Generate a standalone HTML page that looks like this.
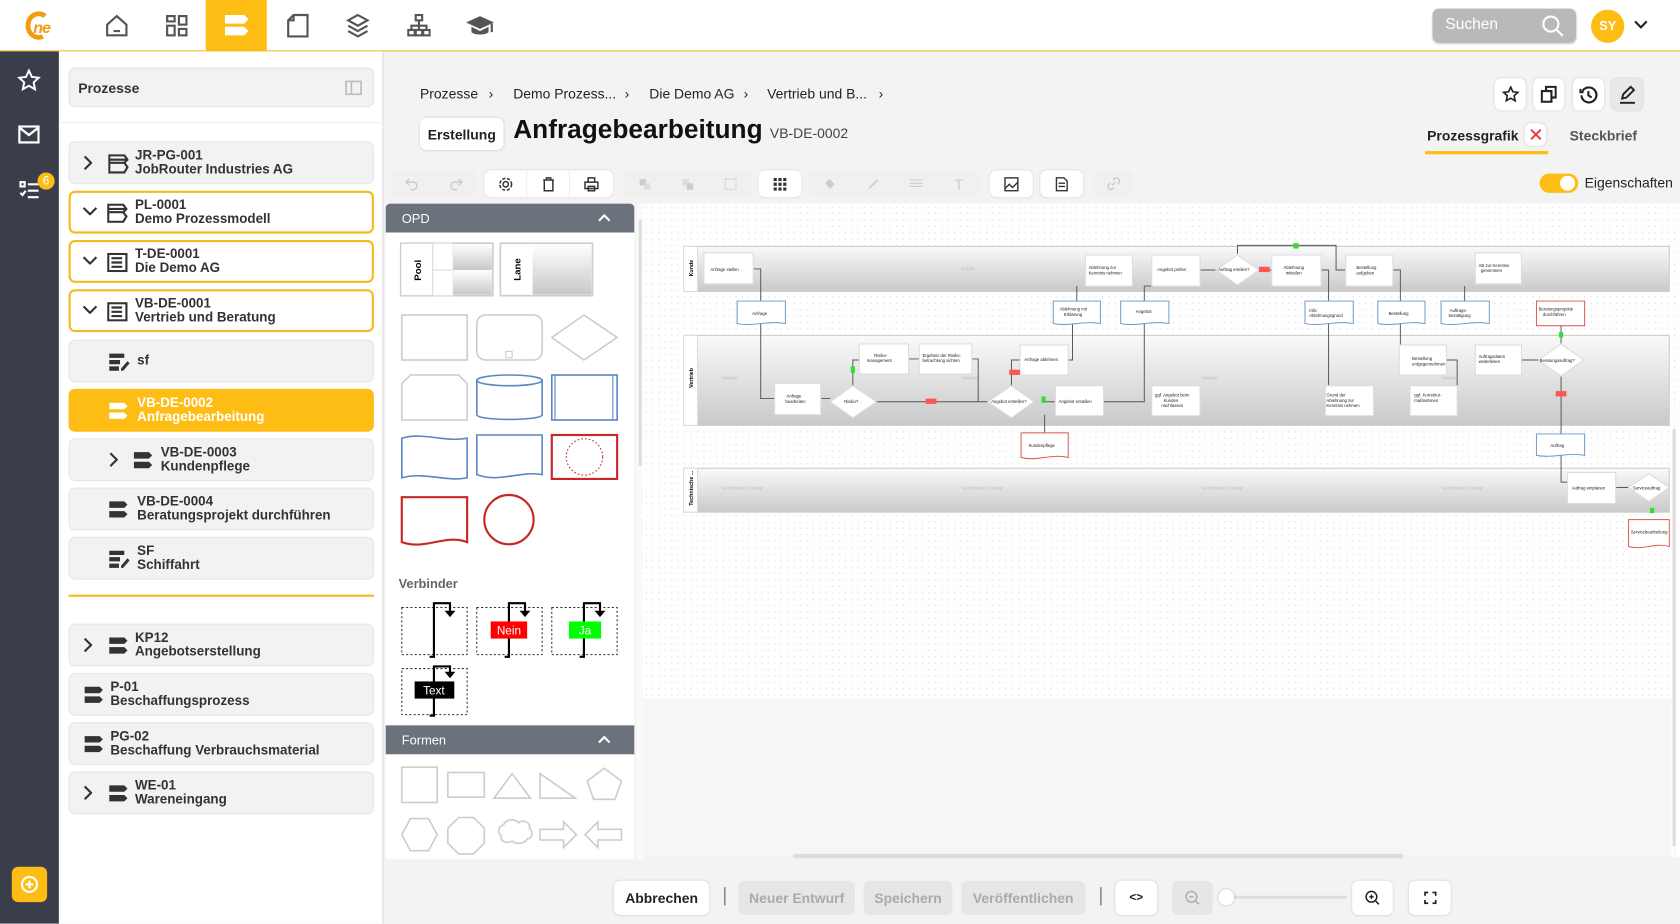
<!DOCTYPE html>
<html><head><meta charset="utf-8">
<style>
*{box-sizing:border-box;margin:0;padding:0}
html,body{width:1680px;height:923px;overflow:hidden;background:#f3f3f3}
body{font-family:"Liberation Sans",sans-serif;color:#222}
#w{position:absolute;left:0;top:0;width:1568px;height:862px;transform:scale(1.07143);transform-origin:0 0;background:#f3f3f3}
.a{position:absolute}
.top{left:0;top:0;width:1568px;height:48px;background:#fff;border-bottom:1px solid #f3b71f}
.nav{top:0;width:57px;height:48px;display:flex;align-items:center;justify-content:center}
.side{left:0;top:48px;width:55px;height:814px;background:#3a3e4a}
.tree{left:55px;top:48px;width:303px;height:814px;background:#fff;border-right:1px solid #ddd}
.it{position:absolute;left:64px;width:285px;height:40px;border-radius:6px;background:#f2f2f2;border:1px solid #e6e6e6;font-size:12.5px;font-weight:bold;color:#333;line-height:13px}
.it.o{background:#fff;border:2px solid #f5bb1c}
.it.y{background:#fdbd14;border:1px solid #fdbd14;color:#fff}
.it .t{position:absolute;top:6px}
.it .c{position:absolute;top:12px}
.it .i{position:absolute;top:11px}
.btn{position:absolute;background:#fff;border-radius:6px;box-shadow:0 0 2px rgba(0,0,0,.15);display:flex;align-items:center;justify-content:center}
.tb{position:absolute;top:159px;height:25px;border-radius:6px;display:flex}
.tb.w{background:#fff;box-shadow:0 0 2px rgba(0,0,0,.12)}
.tb.d{background:#f0f0f0}
.tb div{width:40px;height:25px;display:flex;align-items:center;justify-content:center;border-right:1px solid #eee}
.tb div:last-child{border-right:none}
.bb{position:absolute;top:822px;height:32px;border-radius:6px;font-size:13px;display:flex;align-items:center;justify-content:center}
.bc{position:absolute;top:80px;font-size:13px;color:#222;white-space:nowrap}
</style></head><body><div id="w">

<!-- top bar -->
<div class="a top"></div>
<svg class="a" style="left:22px;top:9px" width="36" height="30" viewBox="0 0 36 30"><path d="M20 6A10 11 0 1 0 18 25" fill="none" stroke="#f39c12" stroke-width="4.5"/><text x="9" y="22" font-size="15" font-weight="bold" font-style="italic" fill="#f39c12" font-family="Liberation Sans" letter-spacing="-1">ne</text></svg>
<div class="a nav" style="left:80px"><svg width="24" height="24" viewBox="0 0 24 24" fill="none" stroke="#555" stroke-width="2"><path d="M3 11L12 3l9 8v10H3z"/><path d="M9 17h6"/></svg></div>
<div class="a nav" style="left:136px"><svg width="22" height="22" viewBox="0 0 22 22" fill="none" stroke="#555" stroke-width="2"><rect x="2" y="2" width="7" height="5"/><rect x="13" y="2" width="7" height="8"/><rect x="2" y="11" width="7" height="9"/><rect x="13" y="14" width="7" height="6"/></svg></div>
<div class="a nav" style="left:192px;background:#fdbd14"><svg width="26" height="24" viewBox="0 0 26 24" fill="#fff"><path d="M2 2h18l4 4-4 4H2z"/><path d="M2 13h18l4 4-4 4H2z"/></svg></div>
<div class="a nav" style="left:249px"><svg width="22" height="24" viewBox="0 0 22 24" fill="none" stroke="#555" stroke-width="2"><path d="M7 2h13v20H2V7z M7 2v5H2"/></svg></div>
<div class="a nav" style="left:305px"><svg width="24" height="24" viewBox="0 0 24 24" fill="none" stroke="#555" stroke-width="2"><path d="M12 2l9 5-9 5-9-5z M3 12l9 5 9-5 M3 17l9 5 9-5"/></svg></div>
<div class="a nav" style="left:362px"><svg width="22" height="22" viewBox="0 0 22 22" fill="none" stroke="#555" stroke-width="2"><rect x="8" y="1" width="6" height="5"/><rect x="1" y="15" width="6" height="5"/><rect x="15" y="15" width="6" height="5"/><rect x="8" y="15" width="6" height="5"/><path d="M11 6v9 M4 15v-4h14v4"/></svg></div>
<div class="a nav" style="left:419px"><svg width="28" height="22" viewBox="0 0 28 22" fill="#555"><path d="M14 2L1 8l13 6 13-6z"/><path d="M6 12v5c3 3 13 3 16 0v-5l-8 4z"/><path d="M25 9v8" stroke="#555" stroke-width="2"/></svg></div>
<div class="a" style="left:1337px;top:8px;width:134px;height:32px;background:#b9b9b9;border-radius:6px;box-shadow:0 1px 2px rgba(0,0,0,.2)"><span class="a" style="left:12px;top:7px;color:#fff;font-size:14.5px">Suchen</span><svg class="a" style="left:101px;top:5px" width="22" height="22" viewBox="0 0 22 22" fill="none" stroke="#fff" stroke-width="2"><circle cx="9.5" cy="9.5" r="7"/><path d="M14.5 14.5l6 6"/></svg></div>
<div class="a" style="left:1485px;top:9px;width:31px;height:31px;border-radius:50%;background:#fdbd14;color:#fff;font-size:12px;font-weight:bold;text-align:center;line-height:31px">SY</div>
<svg class="a" style="left:1525px;top:19px" width="13" height="9" viewBox="0 0 13 9" fill="none" stroke="#222" stroke-width="2"><path d="M1 1l5.5 5.5L12 1"/></svg>

<!-- side -->
<div class="a side"></div>
<svg class="a" style="left:16px;top:64px" width="22" height="22" viewBox="0 0 24 24" fill="none" stroke="#fff" stroke-width="2"><path d="M12 2l3 6.5 7 .8-5.2 4.8 1.4 7L12 17.5 5.8 21l1.4-7L2 9.3l7-.8z"/></svg>
<svg class="a" style="left:17px;top:117px" width="20" height="17" viewBox="0 0 20 17" fill="none" stroke="#fff" stroke-width="2.2"><rect x="1" y="1" width="18" height="15"/><path d="M1 2l9 7 9-7"/></svg>
<svg class="a" style="left:18px;top:168px" width="20" height="18" viewBox="0 0 20 18" fill="none" stroke="#fff" stroke-width="2"><rect x="1" y="2" width="4" height="4"/><path d="M8 4h10 M8 10h10 M8 16h10 M1 12l2 2 3-4"/></svg>
<div class="a" style="left:35px;top:161px;width:16px;height:16px;border-radius:50%;background:#fdbd14;color:#fff;font-size:11px;text-align:center;line-height:16px">6</div>
<div class="a" style="left:11px;top:809px;width:33px;height:33px;border-radius:6px;background:#fdbd14"><svg class="a" style="left:8px;top:8px" width="17" height="17" viewBox="0 0 17 17" fill="none" stroke="#fff" stroke-width="2"><circle cx="8.5" cy="8.5" r="7"/><path d="M8.5 5v7M5 8.5h7"/></svg></div>

<!-- tree -->
<div class="a tree"></div>
<div class="a" style="left:64px;top:63px;width:285px;height:37px;background:#f2f2f2;border:1px solid #e4e4e4;border-radius:6px;font-size:13px;font-weight:bold;color:#333;padding:11px 8px">Prozesse<svg class="a" style="left:257px;top:11px" width="16" height="14" viewBox="0 0 16 14" fill="none" stroke="#bbb" stroke-width="1.5"><rect x="1" y="1" width="14" height="12"/><path d="M6 1v12"/></svg></div>
<div class="a" style="left:55px;top:114px;width:303px;height:1px;background:#eee"></div>

<div class="it" style="top:132px"><svg class="c" style="left:13px" width="8" height="14" viewBox="0 0 8 14" fill="none" stroke="#333" stroke-width="2"><path d="M1 1l6 6-6 6"/></svg><svg class="i" style="left:36px" width="19" height="18" viewBox="0 0 19 18" fill="none" stroke="#333" stroke-width="2"><path d="M1 1h14l3 4-3 3H1z M1 8h14l3 4-3 5H1z M1 5h16"/></svg><div class="t" style="left:61px">JR-PG-001<br>JobRouter Industries AG</div></div>
<div class="it o" style="top:178px"><svg class="c" style="left:11px;top:13px" width="14" height="8" viewBox="0 0 14 8" fill="none" stroke="#333" stroke-width="2"><path d="M1 1l6 6 6-6"/></svg><svg class="i" style="left:34px;top:10px" width="19" height="18" viewBox="0 0 19 18" fill="none" stroke="#333" stroke-width="2"><path d="M1 1h14l3 4-3 3H1z M1 8h14l3 4-3 5H1z M1 5h16"/></svg><div class="t" style="left:60px;top:5px">PL-0001<br>Demo Prozessmodell</div></div>
<div class="it o" style="top:224px"><svg class="c" style="left:11px;top:13px" width="14" height="8" viewBox="0 0 14 8" fill="none" stroke="#333" stroke-width="2"><path d="M1 1l6 6 6-6"/></svg><svg class="i" style="left:34px;top:10px" width="19" height="18" viewBox="0 0 19 18" fill="none" stroke="#333" stroke-width="2"><rect x="1" y="1" width="17" height="16"/><path d="M4 5h10M4 9h10M4 13h10"/></svg><div class="t" style="left:60px;top:5px">T-DE-0001<br>Die Demo AG</div></div>
<div class="it o" style="top:270px"><svg class="c" style="left:11px;top:13px" width="14" height="8" viewBox="0 0 14 8" fill="none" stroke="#333" stroke-width="2"><path d="M1 1l6 6 6-6"/></svg><svg class="i" style="left:34px;top:10px" width="19" height="18" viewBox="0 0 19 18" fill="none" stroke="#333" stroke-width="2"><rect x="1" y="1" width="17" height="16"/><path d="M4 5h10M4 9h10M4 13h10"/></svg><div class="t" style="left:60px;top:5px">VB-DE-0001<br>Vertrieb und Beratung</div></div>
<div class="it" style="top:317px"><svg class="i" style="left:36px" width="20" height="18" viewBox="0 0 20 18" fill="#333"><path d="M1 1h14v4H1z M1 7h10v4H1z M1 13h9v4H1z"/><path d="M12 15l6-7 2 2-6 7h-2z"/></svg><div class="t" style="left:63px;top:12px">sf</div></div>
<div class="it y" style="top:363px"><svg class="i" style="left:36px" width="20" height="18" viewBox="0 0 20 18" fill="#fff"><path d="M1 1h14l3 3-3 3H1z M1 10h14l3 3-3 3H1z"/></svg><div class="t" style="left:63px">VB-DE-0002<br>Anfragebearbeitung</div></div>
<div class="it" style="top:409px"><svg class="c" style="left:37px" width="8" height="14" viewBox="0 0 8 14" fill="none" stroke="#333" stroke-width="2"><path d="M1 1l6 6-6 6"/></svg><svg class="i" style="left:59px" width="20" height="18" viewBox="0 0 20 18" fill="#333"><path d="M1 1h14l3 3-3 3H1z M1 10h14l3 3-3 3H1z"/></svg><div class="t" style="left:85px">VB-DE-0003<br>Kundenpflege</div></div>
<div class="it" style="top:455px"><svg class="i" style="left:36px" width="20" height="18" viewBox="0 0 20 18" fill="#333"><path d="M1 1h14l3 3-3 3H1z M1 10h14l3 3-3 3H1z"/></svg><div class="t" style="left:63px">VB-DE-0004<br>Beratungsprojekt durchführen</div></div>
<div class="it" style="top:501px"><svg class="i" style="left:36px" width="20" height="18" viewBox="0 0 20 18" fill="#333"><path d="M1 1h14v4H1z M1 7h10v4H1z M1 13h9v4H1z"/><path d="M12 15l6-7 2 2-6 7h-2z"/></svg><div class="t" style="left:63px">SF<br>Schiffahrt</div></div>
<div class="a" style="left:64px;top:555px;width:285px;height:2px;background:#f5bb1c"></div>
<div class="it" style="top:582px"><svg class="c" style="left:13px" width="8" height="14" viewBox="0 0 8 14" fill="none" stroke="#333" stroke-width="2"><path d="M1 1l6 6-6 6"/></svg><svg class="i" style="left:36px" width="20" height="18" viewBox="0 0 20 18" fill="#333"><path d="M1 1h14l3 3-3 3H1z M1 10h14l3 3-3 3H1z"/></svg><div class="t" style="left:61px">KP12<br>Angebotserstellung</div></div>
<div class="it" style="top:628px"><svg class="i" style="left:13px" width="20" height="18" viewBox="0 0 20 18" fill="#333"><path d="M1 1h14l3 3-3 3H1z M1 10h14l3 3-3 3H1z"/></svg><div class="t" style="left:38px">P-01<br>Beschaffungsprozess</div></div>
<div class="it" style="top:674px"><svg class="i" style="left:13px" width="20" height="18" viewBox="0 0 20 18" fill="#333"><path d="M1 1h14l3 3-3 3H1z M1 10h14l3 3-3 3H1z"/></svg><div class="t" style="left:38px">PG-02<br>Beschaffung Verbrauchsmaterial</div></div>
<div class="it" style="top:720px"><svg class="c" style="left:13px" width="8" height="14" viewBox="0 0 8 14" fill="none" stroke="#333" stroke-width="2"><path d="M1 1l6 6-6 6"/></svg><svg class="i" style="left:36px" width="20" height="18" viewBox="0 0 20 18" fill="#333"><path d="M1 1h14l3 3-3 3H1z M1 10h14l3 3-3 3H1z"/></svg><div class="t" style="left:61px">WE-01<br>Wareneingang</div></div>

<!-- header -->
<div class="bc" style="left:392px">Prozesse</div><div class="bc" style="left:456px">›</div>
<div class="bc" style="left:479px">Demo Prozess...</div><div class="bc" style="left:583px">›</div>
<div class="bc" style="left:606px">Demo AG</div>
<div class="bc" style="left:606px;background:#f3f3f3">Die Demo AG</div><div class="bc" style="left:694px">›</div>
<div class="bc" style="left:716px">Vertrieb und B...</div><div class="bc" style="left:820px">›</div>
<div class="btn" style="left:392px;top:110px;width:78px;height:30px;font-size:13px;font-weight:bold">Erstellung</div>
<div class="a" style="left:479px;top:108px;font-size:24.5px;font-weight:bold;color:#111">Anfragebearbeitung <span style="font-size:13px;font-weight:normal;color:#444">VB-DE-0002</span></div>
<div class="btn" style="left:1395px;top:73px;width:29px;height:30px"><svg width="16" height="16" viewBox="0 0 24 24" fill="none" stroke="#222" stroke-width="2.3"><path d="M12 2l3 6.5 7 .8-5.2 4.8 1.4 7L12 17.5 5.8 21l1.4-7L2 9.3l7-.8z"/></svg></div>
<div class="btn" style="left:1431px;top:73px;width:29px;height:30px"><svg width="15" height="16" viewBox="0 0 15 16" fill="none" stroke="#222" stroke-width="2"><rect x="1" y="5" width="9" height="10"/><path d="M5 5V1h9v10h-4"/></svg></div>
<div class="btn" style="left:1468px;top:73px;width:29px;height:30px"><svg width="17" height="17" viewBox="0 0 17 17" fill="none" stroke="#222" stroke-width="2"><path d="M3 5a7 7 0 1 1-1 4 M1 3v3h3 M8.5 5v4l3 2"/></svg></div>
<div class="btn" style="left:1504px;top:73px;width:29px;height:30px;background:#e8e8e8"><svg width="17" height="17" viewBox="0 0 17 17" fill="none" stroke="#222" stroke-width="1.8"><path d="M4 12l1-4 7-7 3 3-7 7z M2 16h14"/></svg></div>
<div class="a" style="left:1332px;top:119px;font-size:13px;font-weight:bold">Prozessgrafik</div>
<div class="btn" style="left:1423px;top:115px;width:20px;height:21px"><svg width="11" height="11" viewBox="0 0 11 11" stroke="#e53935" stroke-width="1.8"><path d="M1 1l9 9M10 1l-9 9"/></svg></div>
<div class="a" style="left:1465px;top:119px;font-size:13px;font-weight:bold;color:#555">Steckbrief</div>
<div class="a" style="left:1330px;top:141px;width:115px;height:3px;background:#fdbd14"></div>
<div class="a" style="left:1437px;top:162px;width:36px;height:18px;border-radius:9px;background:#fdbd14"><div class="a" style="left:19px;top:2px;width:14px;height:14px;border-radius:50%;background:#fff"></div></div>
<div class="a" style="left:1479px;top:163px;font-size:13px">Eigenschaften</div>

<!-- toolbar -->
<div class="tb d" style="left:365px"><div><svg width="14" height="12" viewBox="0 0 14 12" fill="none" stroke="#ccc" stroke-width="1.4"><path d="M4 1L1 4l3 3M1 4h8a4 4 0 0 1 0 7H5"/></svg></div><div><svg width="14" height="12" viewBox="0 0 14 12" fill="none" stroke="#ccc" stroke-width="1.4"><path d="M10 1l3 3-3 3M13 4H5a4 4 0 0 0 0 7h4"/></svg></div></div>
<div class="tb w" style="left:452px"><div><svg width="14" height="14" viewBox="0 0 14 14" fill="none" stroke="#333" stroke-width="1.4"><circle cx="7" cy="7" r="2.5"/><circle cx="7" cy="7" r="5.5" stroke-dasharray="3 1.5"/></svg></div><div><svg width="12" height="14" viewBox="0 0 12 14" fill="none" stroke="#333" stroke-width="1.4"><path d="M1 3h10M4 3V1h4v2M2 3v10h8V3"/></svg></div><div><svg width="14" height="14" viewBox="0 0 14 14" fill="none" stroke="#333" stroke-width="1.4"><rect x="1" y="5" width="12" height="6"/><path d="M4 5V1h6v4M4 9h6v4H4z"/></svg></div></div>
<div class="tb d" style="left:582px"><div><svg width="12" height="12"><rect x="1" y="1" width="6" height="6" fill="#ccc"/><rect x="5" y="5" width="6" height="6" fill="#ddd"/></svg></div><div><svg width="12" height="12"><rect x="1" y="1" width="6" height="6" fill="#ddd"/><rect x="5" y="5" width="6" height="6" fill="#ccc"/></svg></div><div><svg width="12" height="12"><rect x="1" y="1" width="10" height="10" fill="none" stroke="#ccc" stroke-dasharray="2 1"/></svg></div></div>
<div class="tb w" style="left:708px"><div><svg width="12" height="12" fill="#333"><rect x="0" y="0" width="3" height="3"/><rect x="4.5" y="0" width="3" height="3"/><rect x="9" y="0" width="3" height="3"/><rect x="0" y="4.5" width="3" height="3"/><rect x="4.5" y="4.5" width="3" height="3"/><rect x="9" y="4.5" width="3" height="3"/><rect x="0" y="9" width="3" height="3"/><rect x="4.5" y="9" width="3" height="3"/><rect x="9" y="9" width="3" height="3"/></svg></div></div>
<div class="tb d" style="left:755px"><div><svg width="12" height="12" fill="#ccc"><path d="M5 1l5 5-4 4-5-5z"/></svg></div><div><svg width="12" height="12" stroke="#ccc" stroke-width="1.5"><path d="M2 10L10 2"/></svg></div><div><svg width="12" height="10" stroke="#ccc"><path d="M0 1h12M0 4h12M0 7h12"/></svg></div><div style="color:#ccc;font-size:14px">T</div></div>
<div class="tb w" style="left:924px"><div><svg width="14" height="14" viewBox="0 0 14 14" fill="none" stroke="#333" stroke-width="1.3"><rect x="1" y="1" width="12" height="12"/><path d="M1 11l4-4 3 3 5-5"/></svg></div></div>
<div class="tb w" style="left:971px"><div><svg width="12" height="14" viewBox="0 0 12 14" fill="none" stroke="#333" stroke-width="1.3"><path d="M1 1h7l3 3v9H1z M3 6h6M3 9h6"/></svg></div></div>
<div class="tb d" style="left:1020px"><div style="width:38px"><svg width="13" height="13" viewBox="0 0 13 13" fill="none" stroke="#ccc" stroke-width="1.4"><path d="M5 8l3-3 M6 3l1-1a2.5 2.5 0 0 1 4 4l-1 1 M7 10l-1 1a2.5 2.5 0 0 1-4-4l1-1"/></svg></div></div>

<!-- palette -->
<div class="a" style="left:360px;top:190px;width:232px;height:612px;background:#fff"></div>
<div class="a" style="left:360px;top:190px;width:232px;height:27px;background:#6b727b;border-radius:4px 4px 0 0;color:#fff;font-size:12px;padding:7px 15px">OPD<svg class="a" style="left:198px;top:9px" width="12" height="8" viewBox="0 0 12 8" fill="none" stroke="#fff" stroke-width="2"><path d="M1 7l5-5 5 5"/></svg></div>
<svg class="a" style="left:360px;top:217px" width="232" height="460" viewBox="360 217 232 460">
<defs><linearGradient id="g" x1="0" y1="0" x2="0" y2="1"><stop offset="0" stop-color="#fff"/><stop offset="1" stop-color="#c8c8c8"/></linearGradient></defs>
<rect x="374" y="227" width="86" height="49" fill="#fff" stroke="#ccc" stroke-width="1.5"/><rect x="374" y="227" width="30" height="49" fill="#fff" stroke="#ccc"/><rect x="404" y="227" width="19" height="25" fill="#fff" stroke="#ddd"/><rect x="404" y="252" width="19" height="24" fill="#fff" stroke="#ddd"/><rect x="423" y="228" width="36" height="24" fill="url(#g)"/><rect x="423" y="252" width="36" height="23" fill="url(#g)"/>
<text transform="translate(393,262) rotate(-90)" font-size="9" font-family="Liberation Sans" font-weight="bold">Pool</text>
<rect x="467" y="227" width="86" height="49" fill="#fff" stroke="#ccc" stroke-width="1.5"/><rect x="497" y="228" width="55" height="47" fill="url(#g)"/>
<text transform="translate(486,262) rotate(-90)" font-size="9" font-family="Liberation Sans" font-weight="bold">Lane</text>
<rect x="375" y="294" width="61" height="42" fill="none" stroke="#ccc" stroke-width="1.5"/>
<rect x="445" y="294" width="61" height="42" rx="8" fill="none" stroke="#ccc" stroke-width="1.5"/><rect x="472" y="328" width="6" height="6" fill="none" stroke="#ccc"/>
<path d="M515 315l30-21 31 21-31 21z" fill="none" stroke="#ccc" stroke-width="1.5"/>
<path d="M375 392v-34l8-8h45l8 8v34z" fill="none" stroke="#ccc" stroke-width="1.5"/>
<path d="M445 354v33c0 6 61 6 61 0v-33" fill="none" stroke="#5b86c0" stroke-width="1.5"/><ellipse cx="475.5" cy="355" rx="30.5" ry="5" fill="none" stroke="#5b86c0" stroke-width="1.5"/>
<rect x="515" y="350" width="61" height="42" fill="none" stroke="#5b86c0" stroke-width="1.5"/><path d="M518 350v42M572 350v42" stroke="#5b86c0"/>
<path d="M375 409c20-6 40 4 61 0v37c-20 4-40-6-61 0z" fill="none" stroke="#5b86c0" stroke-width="1.5"/>
<path d="M445 406h61v37c-20-4-40 8-61 0z" fill="none" stroke="#5b86c0" stroke-width="1.5"/>
<rect x="515" y="406" width="61" height="41" fill="none" stroke="#c62828" stroke-width="2"/><circle cx="545.5" cy="426.5" r="17" fill="none" stroke="#c62828" stroke-dasharray="1.5 2"/>
<path d="M375 464h61v42c-20-8-40 8-61 0z" fill="none" stroke="#c62828" stroke-width="2"/>
<circle cx="475" cy="485" r="23" fill="none" stroke="#c62828" stroke-width="2"/>
<text x="372" y="549" font-size="12" font-family="Liberation Sans" font-weight="bold" fill="#666">Verbinder</text>
<g fill="none" stroke="#333" stroke-dasharray="2 2"><rect x="375" y="567" width="61" height="44"/><rect x="445" y="567" width="61" height="44"/><rect x="515" y="567" width="61" height="44"/><rect x="375" y="624" width="61" height="43"/></g>
<g fill="none" stroke="#000" stroke-width="2"><path d="M401 613h4v-50h15v8 M471 613h4v-50h15v8 M541 613h4v-50h15v8 M401 668h4v-46h15v8"/></g>
<g fill="#000"><path d="M415 570h10l-5 6z M485 570h10l-5 6z M555 570h10l-5 6z M415 627h10l-5 6z"/></g>
<rect x="458" y="580" width="34" height="16" fill="#f00"/><text x="475" y="592" font-size="11" fill="#fff" text-anchor="middle" font-family="Liberation Sans">Nein</text>
<rect x="531" y="580" width="30" height="16" fill="#0f0"/><text x="546" y="592" font-size="11" fill="#fff" text-anchor="middle" font-family="Liberation Sans">Ja</text>
<rect x="387" y="636" width="37" height="16" fill="#000"/><text x="405" y="648" font-size="11" fill="#fff" text-anchor="middle" font-family="Liberation Sans">Text</text>
</svg>
<div class="a" style="left:360px;top:677px;width:232px;height:27px;background:#6b727b;color:#fff;font-size:12px;padding:7px 15px">Formen<svg class="a" style="left:198px;top:9px" width="12" height="8" viewBox="0 0 12 8" fill="none" stroke="#fff" stroke-width="2"><path d="M1 7l5-5 5 5"/></svg></div>
<svg class="a" style="left:360px;top:704px" width="232" height="98" viewBox="360 704 232 98" fill="none" stroke="#ccc" stroke-width="1.5">
<rect x="375" y="716" width="33" height="33"/><rect x="418" y="721" width="34" height="23"/><path d="M461 745l17-23 17 23z"/><path d="M504 745v-23l33 23z"/><path d="M564 717l16 12-6 17h-20l-6-17z"/>
<path d="M383 764h17l8 15-8 15h-17l-8-15z"/><path d="M428 763h14l10 10v14l-10 10h-14l-10-10v-14z"/><path d="M470 770c2-6 12-6 14-2 4-4 12 0 10 5 4 2 3 10-2 10-2 5-12 5-14 2-5 3-12 0-10-5-4-2-3-9 2-10z"/><path d="M504 774h22v-7l12 12-12 12v-7h-22z"/><path d="M580 774h-22v-7l-12 12 12 12v-7h22z"/>
</svg>

<!-- canvas -->
<div class="a" style="left:600px;top:190px;width:968px;height:610px;background-color:#fff;background-image:radial-gradient(#e8e8e8 0.7px,transparent 0.8px);background-size:6px 6px"></div>
<div class="a" style="left:600px;top:652px;width:960px;height:148px;background:#f6f6f6"></div>
<div class="a" style="left:594px;top:190px;width:6px;height:612px;background:#fafafa"></div>
<div class="a" style="left:596px;top:205px;width:3px;height:230px;background:#ddd;border-radius:2px"></div>
<div class="a" style="left:740px;top:797px;width:570px;height:4px;background:#ddd;border-radius:2px"></div>
<div class="a" style="left:1561px;top:400px;width:3px;height:390px;background:#ddd;border-radius:2px"></div>

<svg class="a" style="left:600px;top:190px" width="968" height="610" viewBox="600 190 968 610" font-family="Liberation Sans" font-size="4.5">
<defs><linearGradient id="l" x1="0" y1="0" x2="0" y2="1"><stop offset="0" stop-color="#fafafa"/><stop offset="1" stop-color="#c9c9c9"/></linearGradient></defs>
<g stroke="#ccc"><rect x="638" y="230" width="920" height="42" fill="url(#l)"/><rect x="638" y="313" width="920" height="84" fill="url(#l)"/><rect x="638" y="437" width="920" height="41" fill="url(#l)"/></g>
<g fill="#fff" stroke="#ddd"><rect x="638" y="230" width="13" height="42"/><rect x="638" y="313" width="13" height="84"/><rect x="638" y="437" width="13" height="41"/></g>
<g font-size="5" font-weight="bold"><text transform="translate(647,258) rotate(-90)">Kunde</text><text transform="translate(647,362) rotate(-90)">Vertrieb</text><text transform="translate(647,472) rotate(-90)">Technische ...</text></g>
<g fill="#bbb"><text x="897" y="252">Kunde</text><text x="673" y="354">Vertrieb</text><text x="897" y="354">Vertrieb</text><text x="1121" y="354">Vertrieb</text><text x="1345" y="354">Vertrieb</text><text x="673" y="457">Technische Leitung</text><text x="897" y="457">Technische Leitung</text><text x="1121" y="457">Technische Leitung</text><text x="1345" y="457">Technische Leitung</text></g>
<g fill="none" stroke="#555" stroke-width="0.9">
<path d="M703 251h7v30 M710 302v70h13 M766 372h9 M818 375h104 M796 360v-24h6 M848 335h10 M907 335h6v40h9 M944 360v-24h8 M997 336h4v-35 M1005 281v-14 M975 375h10 M1030 375h38v-73 M1068 281v-14h7 M1120 252h15 M1175 252h12 M1233 252h7v29 M1240 302v70h-3 M1155 237v-8h92v23h9 M1300 252h7v29 M1307 302v33 M1350 336h10v24 M1360 372h-44 M1420 336h16 M1367 302v-35 M1457 350v55 M1457 425v25h6 M1508 455h12 M975 387v17 M1457 322v-18"/>
</g>
<g fill="#fff" stroke="#ddd">
<rect x="657" y="236" width="46" height="29"/><rect x="1013" y="238" width="44" height="29"/><rect x="1075" y="238" width="45" height="29"/><rect x="1187" y="238" width="46" height="29"/><rect x="1256" y="238" width="44" height="29"/><rect x="1377" y="236" width="43" height="29"/>
<rect x="723" y="358" width="43" height="29"/><rect x="802" y="321" width="46" height="28"/><rect x="858" y="321" width="49" height="28"/><rect x="952" y="322" width="45" height="28"/><rect x="985" y="360" width="45" height="28"/><rect x="1075" y="360" width="45" height="28"/><rect x="1237" y="360" width="45" height="28"/><rect x="1306" y="322" width="44" height="28"/><rect x="1316" y="360" width="44" height="28"/><rect x="1377" y="322" width="43" height="28"/><rect x="1463" y="441" width="45" height="29"/>
<path d="M1135 252l20-14 20 14-20 14z M775 375l21-15 22 15-22 15z M922 375l22-15 21 15-21 15z M1436 336l21-15 21 15-21 15z M1520 455l19-13 19 13-19 13z"/>
</g>
<g fill="#fff" stroke="#6d93c7" stroke-width="0.9">
<path d="M688 281h45v21c-15-3-30 3-45 0z M983 281h44v21c-15-3-30 3-44 0z M1046 281h45v21c-15-3-30 3-45 0z M1218 281h45v21c-15-3-30 3-45 0z M1286 281h44v21c-15-3-30 3-44 0z M1345 281h45v21c-15-3-30 3-45 0z M1434 405h45v20c-15-3-30 3-45 0z"/>
</g>
<g fill="#fff" stroke="#d9534f" stroke-width="0.9"><path d="M1434 281h45v23h-45z M953 404h44v23c-15-4-30 4-44 0z M1520 485h38v25c-13-4-25 4-38 0z"/></g>
<g fill="#f55"><rect x="1175" y="249" width="10" height="5"/><rect x="864" y="372" width="10" height="5"/><rect x="942" y="345" width="10" height="5"/><rect x="1452" y="365" width="10" height="5"/></g>
<g fill="#3d3"><rect x="1207" y="227" width="5" height="5"/><rect x="794" y="342" width="4" height="6"/><rect x="972" y="370" width="4" height="6"/><rect x="1455" y="310" width="4" height="5"/><rect x="1540" y="474" width="4" height="5"/></g>
<g fill="#222" font-size="4"><text x="663" y="253">Anfrage stellen</text><text x="1016" y="251">Ablehnung zur</text><text x="1016" y="256">Kenntnis nehmen</text><text x="1080" y="253">Angebot prüfen</text><text x="1137" y="253">Auftrag erteilen?</text><text x="1198" y="251">Ablehnung</text><text x="1200" y="256">mitteilen</text><text x="1266" y="251">Bestellung</text><text x="1266" y="256">aufgeben</text><text x="1380" y="249">AB zur Kenntnis</text><text x="1382" y="254">genommen</text>
<text x="702" y="294">Anfrage</text><text x="989" y="290">Ablehnung mit</text><text x="993" y="295">Erklärung</text><text x="1060" y="292">Angebot</text><text x="1222" y="291">Info:</text><text x="1222" y="296">Ablehnungsgrund</text><text x="1296" y="294">Bestellung</text><text x="1353" y="291">Auftrags-</text><text x="1352" y="296">bestätigung</text><text x="1436" y="290">Beratungsprojekte</text><text x="1440" y="295">durchführen</text>
<text x="734" y="371">Anfrage</text><text x="733" y="376">bearbeiten</text><text x="788" y="376">Risiko?</text><text x="816" y="333">Risiko-</text><text x="809" y="338">management</text><text x="861" y="333">Ergebnis der Risiko-</text><text x="861" y="338">betrachtung sichten</text><text x="925" y="376">Angebot erstellen?</text><text x="956" y="337">Anfrage ablehnen</text><text x="988" y="376">Angebot erstellen</text><text x="1078" y="370">ggf. Angebot beim</text><text x="1086" y="375">Kunden</text><text x="1084" y="380">nachfassen</text><text x="1238" y="370">Grund der</text><text x="1238" y="375">Ablehnung zur</text><text x="1238" y="380">Kenntnis nehmen</text><text x="1318" y="336">Bestellung</text><text x="1318" y="341">entgegennehmen</text><text x="1320" y="370">ggf. Korrektur-</text><text x="1320" y="375">maßnahmen</text><text x="1380" y="334">Auftragsdaten</text><text x="1380" y="339">weiterleiten</text><text x="1437" y="338">Beratungsauftrag?</text>
<text x="960" y="417">Kundenpflege</text><text x="1447" y="417">Auftrag</text><text x="1467" y="457">Auftrag einplanen</text><text x="1524" y="457">Serviceauftrag</text><text x="1522" y="498">Servicebearbeitung</text></g>
</svg>

<!-- bottom -->
<div class="bb" style="left:573px;width:89px;background:#fff;box-shadow:0 0 2px rgba(0,0,0,.15);font-weight:bold">Abbrechen</div>
<div class="a" style="left:676px;top:828px;width:1px;height:17px;background:#555"></div>
<div class="bb" style="left:689px;width:109px;background:#e6e6e6;color:#aaa;font-weight:bold">Neuer Entwurf</div>
<div class="bb" style="left:806px;width:83px;background:#e6e6e6;color:#aaa;font-weight:bold">Speichern</div>
<div class="bb" style="left:897px;width:116px;background:#e6e6e6;color:#aaa;font-weight:bold">Veröffentlichen</div>
<div class="a" style="left:1027px;top:828px;width:1px;height:17px;background:#555"></div>
<div class="bb" style="left:1041px;width:39px;background:#fff;box-shadow:0 0 2px rgba(0,0,0,.15);font-size:11px;font-weight:bold">&lt;&gt;</div>
<div class="bb" style="left:1094px;width:38px;background:#e6e6e6"><svg width="14" height="14" viewBox="0 0 14 14" fill="none" stroke="#aaa" stroke-width="1.3"><circle cx="6" cy="6" r="5"/><path d="M10 10l3 3M4 6h4"/></svg></div>
<div class="a" style="left:1145px;top:836px;width:112px;height:3px;background:#ddd;border-radius:2px"></div>
<div class="a" style="left:1137px;top:830px;width:15px;height:15px;border-radius:50%;background:#fff;box-shadow:0 0 2px rgba(0,0,0,.3)"></div>
<div class="bb" style="left:1262px;width:38px;background:#fff;box-shadow:0 0 2px rgba(0,0,0,.15)"><svg width="14" height="14" viewBox="0 0 14 14" fill="none" stroke="#222" stroke-width="1.4"><circle cx="6" cy="6" r="5"/><path d="M10 10l3 3M4 6h4M6 4v4"/></svg></div>
<div class="bb" style="left:1315px;width:39px;background:#fff;box-shadow:0 0 2px rgba(0,0,0,.15)"><svg width="12" height="12" viewBox="0 0 12 12" fill="none" stroke="#222" stroke-width="1.6"><path d="M1 4V1h3M8 1h3v3M11 8v3H8M4 11H1V8"/></svg></div>

</div></body></html>
